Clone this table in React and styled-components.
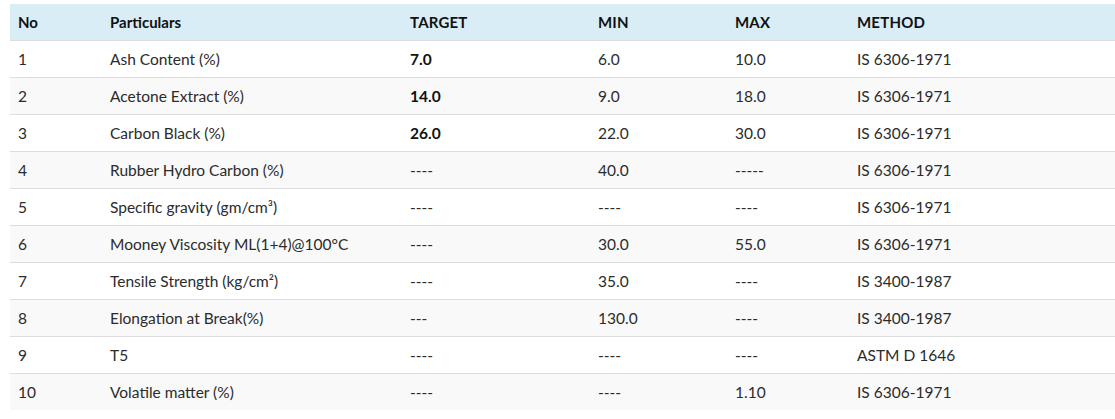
import React from "react";
import styled, { createGlobalStyle } from "styled-components";

const Global = createGlobalStyle`
  html, body { margin: 0; padding: 0; background: #fff; overflow: hidden; }
  body { font-family: Lato, "Liberation Sans", sans-serif; }
  *, *::before, *::after { box-sizing: border-box; }
`;

const Page = styled.div`
  padding: 4px 0 0 10px;
  width: 1115px;
`;

const Table = styled.table`
  width: 100%;
  border-collapse: collapse;
  border-spacing: 0;
  font-size: 15.5px;
  line-height: 20px;
  color: #2b2b2b;
  table-layout: fixed;
`;

const HeadRow = styled.tr`
  background: #d9edf7;
`;

const Th = styled.th`
  text-align: left;
  font-weight: 700;
  font-size: 15px;
  color: #111;
  padding: 8px 8px;
  width: ${(p) => p.$w || "auto"};
  letter-spacing: ${(p) => (p.$caps ? "0.2px" : "0")};
`;

const Row = styled.tr`
  background: ${(p) => (p.$striped ? "#f9f9f9" : "#fff")};
  border-top: 1px solid #ddd;
`;

const Td = styled.td`
  padding: 8px 8px;
  font-weight: ${(p) => (p.$bold ? 700 : 400)};
  color: ${(p) => (p.$bold ? "#111" : "#2b2b2b")};
  white-space: nowrap;
`;

const cols = [
  { label: "No", w: "92px" },
  { label: "Particulars", w: "300px" },
  { label: "TARGET", w: "188px", caps: true },
  { label: "MIN", w: "137px", caps: true },
  { label: "MAX", w: "122px", caps: true },
  { label: "METHOD", caps: true },
];

const rows = [
  ["1", "Ash Content (%)", "7.0", "6.0", "10.0", "IS 6306-1971"],
  ["2", "Acetone Extract (%)", "14.0", "9.0", "18.0", "IS 6306-1971"],
  ["3", "Carbon Black (%)", "26.0", "22.0", "30.0", "IS 6306-1971"],
  ["4", "Rubber Hydro Carbon (%)", "----", "40.0", "-----", "IS 6306-1971"],
  ["5", "Specific gravity (gm/cm³)", "----", "----", "----", "IS 6306-1971"],
  ["6", "Mooney Viscosity ML(1+4)@100°C", "----", "30.0", "55.0", "IS 6306-1971"],
  ["7", "Tensile Strength (kg/cm²)", "----", "35.0", "----", "IS 3400-1987"],
  ["8", "Elongation at Break(%)", "---", "130.0", "----", "IS 3400-1987"],
  ["9", "T5", "----", "----", "----", "ASTM D 1646"],
  ["10", "Volatile matter (%)", "----", "----", "1.10", "IS 6306-1971"],
];

export default function App() {
  return (
    <>
      <Global />
      <Page>
        <Table>
          <thead>
            <HeadRow>
              {cols.map((c) => (
                <Th key={c.label} $w={c.w} $caps={c.caps}>
                  {c.label}
                </Th>
              ))}
            </HeadRow>
          </thead>
          <tbody>
            {rows.map((r, i) => (
              <Row key={r[0]} $striped={i % 2 === 1}>
                {r.map((cell, j) => (
                  <Td key={j} $bold={j === 2 && !cell.startsWith("-")}>
                    {cell}
                  </Td>
                ))}
              </Row>
            ))}
          </tbody>
        </Table>
      </Page>
    </>
  );
}
